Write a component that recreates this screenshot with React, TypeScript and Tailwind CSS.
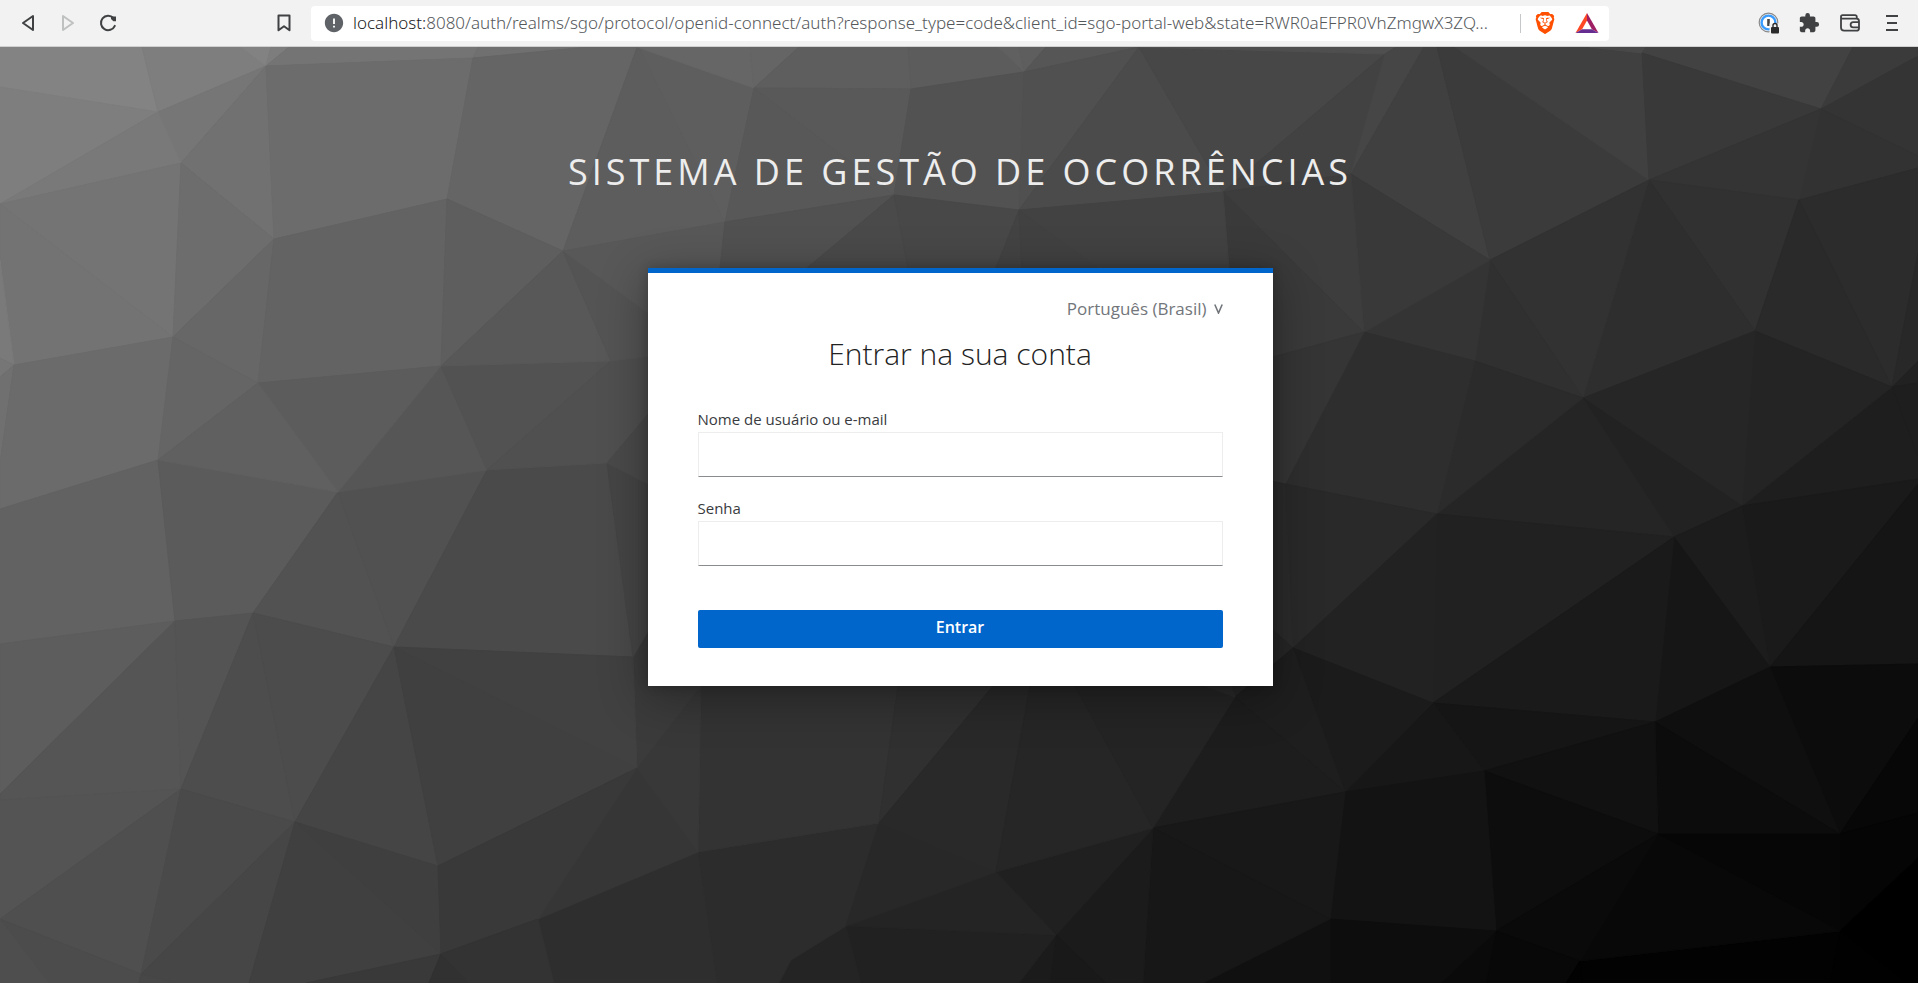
import React from "react";
import { SiBrave } from "react-icons/si";
import { MdExtension, MdError } from "react-icons/md";

/* Shared corners of the low-poly backdrop. */
const POINTS: Record<string, string> = {
  a1: "158,112", a2: "266,66", a3: "181,163", a4: "274,239", a5: "473,58", a6: "447,199",
  a7: "563,251", a8: "0,204", a9: "173,337", a10: "14,365", a11: "258,383", a12: "441,366",
  a13: "611,361", a14: "158,460", a15: "338,492", a16: "487,470", a17: "607,463", a18: "0,509",
  a19: "175,621", a20: "638,45", a21: "394,647", a22: "633,657", a23: "181,789", a24: "295,822",
  a25: "438,866", a26: "637,768", a27: "441,954", a28: "538,919", a29: "141,974", a30: "0,919",
  a31: "698,852", a32: "879,823", a33: "846,926", a34: "996,872", a35: "1153,828", a36: "1056,935",
  a37: "1345,792", a38: "1330,919", a39: "791,960", a40: "1235,697", a41: "1293,648", a42: "1437,514",
  a43: "1674,537", a44: "1742,506", a45: "1770,667", a46: "1433,703", a47: "1655,722", a48: "1484,771",
  a49: "1658,834", a50: "1840,834", a51: "1496,931", a52: "1580,961", a53: "1840,931", a54: "1285,484",
  a55: "1385,54", a56: "1351,174", a58: "1490,260", a59: "1649,180", a60: "1642,53", a61: "1821,109",
  a62: "1799,200", a63: "1755,331", a64: "1892,387", a65: "1583,398", a66: "1475,361", a67: "1364,332",
  a68: "1916,57", a69: "1139,47", a70: "1223,192", a71: "754,88", a72: "911,89", a73: "1024,72",
  a74: "894,195", a75: "1019,210", a76: "725,222", a80: "253,613",
};

/* Grey level of each facet, then its corners. */
const FACETS: [number, string][] = [
  [131, "0,47 142,47 a1 0,87"],
  [126, "0,87 a1 a8"],
  [126, "142,47 241,47 a2 a1"],
  [130, "241,47 271,47 a2"],
  [125, "271,47 289,47 a2"],
  [116, "289,47 478,47 a5 a2"],
  [112, "478,47 588,47 a5"],
  [118, "a1 a2 a3"],
  [121, "a1 a3 a8"],
  [113, "a2 a4 a3"],
  [116, "a8 a3 a9"],
  [115, "a8 a9 a10 0,260"],
  [109, "a3 a4 a9"],
  [108, "a2 a5 a6 a4"],
  [101, "a5 588,47 637,47 a7 a6"],
  [122, "0,260 a10 0,358"],
  [118, "0,358 a10 0,377"],
  [112, "0,377 a10 0,463"],
  [107, "a10 a9 a14 a18 0,463"],
  [103, "a9 a4 a11"],
  [101, "a9 a11 a14"],
  [99, "a4 a6 a12 a11"],
  [94, "a6 a7 a12"],
  [93, "a20 a76 a7"],
  [94, "a20 a71 a76"],
  [102, "637,47 750,47 a71"],
  [101, "750,47 799,47 a71"],
  [94, "799,47 908,47 a72 a71"],
  [92, "908,47 998,47 a73 a72"],
  [96, "998,47 1019,47 a73"],
  [94, "1019,47 1046,47 a73"],
  [86, "1046,47 1139,47 a73"],
  [88, "a71 a74 a76"],
  [89, "a71 a72 a74"],
  [82, "a72 a73 a75 a74"],
  [80, "a73 a69 a75"],
  [75, "a69 a70 a75"],
  [71, "a69 a55 a70"],
  [79, "1139,47 1396,47 a55"],
  [66, "a70 a55 a56"],
  [70, "a55 1396,47 1424,47 a56"],
  [64, "1424,47 1437,47 a58 a56"],
  [59, "1437,47 1455,47 a59 a58"],
  [64, "1455,47 1589,47 a60 a59"],
  [73, "1589,47 1646,47 a60"],
  [66, "1646,47 1853,47 a61 a60"],
  [57, "a60 a61 a59"],
  [59, "1853,47 1918,47 a68 a61"],
  [52, "a61 a68 1918,57 1918,156"],
  [50, "a61 1918,156 1918,168 a62"],
  [52, "a59 a61 a62"],
  [49, "a59 a62 a63"],
  [46, "a59 a63 a65"],
  [50, "a58 a59 a65"],
  [48, "a58 a65 a66"],
  [52, "a58 a66 a67"],
  [57, "a56 a58 a67"],
  [61, "a70 a56 a67"],
  [58, "a70 a67 1240,366 1229,268"],
  [44, "a62 1918,168 1918,253 a64"],
  [42, "a62 a64 a63"],
  [40, "a64 1918,253 1918,361"],
  [33, "a64 1918,361 1918,383"],
  [30, "a64 1918,383 1918,457"],
  [30, "a64 1918,457 1918,479 a44"],
  [36, "a63 a64 a44"],
  [38, "a63 a44 a65"],
  [34, "a65 a44 a43"],
  [37, "a65 a43 a42"],
  [43, "a66 a65 a42"],
  [46, "a67 a66 a42 a54"],
  [53, "a67 a54 1240,474 1240,366"],
  [41, "a54 a42 a41"],
  [43, "a54 a41 1240,600 1240,474"],
  [38, "a41 1240,600 1230,686 a40"],
  [33, "a42 a43 a46"],
  [34, "a42 a46 a41"],
  [26, "a44 1918,479 1918,488 a45"],
  [21, "1918,484 1918,664 a45"],
  [28, "a44 a45 a43"],
  [22, "a43 a45 a47"],
  [26, "a43 a47 a46"],
  [21, "a46 a47 a48"],
  [23, "a46 a48 a37"],
  [27, "a41 a46 a37"],
  [30, "a40 a41 a37"],
  [29, "a35 a40 a37"],
  [12, "a45 1918,664 1918,718 a50"],
  [15, "a45 a50 a47"],
  [12, "a47 a50 a49"],
  [17, "a47 a49 a48"],
  [13, "a48 a49 a51"],
  [19, "a37 a48 a51 a38"],
  [7, "a50 1918,718 1918,813"],
  [5, "a50 1918,813 1918,858 a53"],
  [0, "a53 1918,858 1918,983 1907,983"],
  [1, "a53 1907,983 1830,983"],
  [2, "a53 1830,983 1582,983 a52"],
  [6, "a49 a50 a53"],
  [8, "a49 a53 a52"],
  [10, "a49 a52 a51"],
  [8, "a51 a52 1566,983 1486,983"],
  [10, "a51 1486,983 1441,983"],
  [2, "a52 1566,983 1582,983"],
  [13, "a38 a51 1441,983 1330,983"],
  [16, "a38 1330,983 1203,983"],
  [24, "a35 a37 a38"],
  [23, "a35 a38 1203,983 1143,983"],
  [27, "a36 a35 1143,983 1106,983"],
  [32, "a34 a35 a36"],
  [25, "a36 1106,983 1050,983"],
  [27, "a36 1050,983 1019,983"],
  [33, "a33 a36 1019,983 861,983"],
  [36, "a33 a34 a36"],
  [36, "a33 861,983 779,983 a39"],
  [44, "a31 a32 a33 a39 779,983 717,983"],
  [40, "a32 a34 a33"],
  [46, "a28 a31 717,983 554,983"],
  [54, "a26 a31 a28"],
  [51, "a31 a32 898,686 701,686"],
  [56, "a26 701,686 a31"],
  [48, "a32 993,686 898,686"],
  [41, "a32 993,686 1030,686 a34"],
  [38, "a34 1030,686 1075,686 a35"],
  [36, "a35 1075,686 1205,686 a40"],
  [42, "1205,686 1231,686 a40"],
  [59, "a22 a26 701,686 660,620"],
  [98, "a18 a14 a19 0,644"],
  [91, "a14 a15 a80 a19"],
  [82, "a15 a21 a80"],
  [81, "a15 a16 a21"],
  [74, "a16 a17 a22 a21"],
  [69, "a17 660,490 660,610 a22"],
  [86, "a12 a16 a15"],
  [82, "a12 a13 a16"],
  [92, "a11 a12 a15"],
  [96, "a11 a15 a14"],
  [88, "a7 a12 a13"],
  [80, "a13 660,355 660,400 a17 a16"],
  [74, "a17 660,400 660,490"],
  [84, "a7 a13 660,355 660,322"],
  [88, "a7 a76 720,300 660,322"],
  [81, "a76 a74 807,268 720,268"],
  [74, "a74 807,268 908,268"],
  [72, "a74 908,268 996,268 a75"],
  [67, "a75 996,268 1022,268"],
  [65, "a75 1022,268 1098,268"],
  [66, "a75 a70 1229,268 1098,268"],
  [93, "0,644 a19 0,794"],
  [85, "a19 a23 0,800 0,794"],
  [84, "a19 a80 a23"],
  [77, "a80 a24 a23"],
  [76, "a80 a21 a24"],
  [69, "a21 a25 a24"],
  [64, "a21 a26 a25"],
  [65, "a21 a22 a26"],
  [84, "0,800 a23 a30"],
  [79, "a30 a23 a29"],
  [74, "a23 a24 a29"],
  [70, "a24 249,983 175,983 a29"],
  [64, "a24 a27 306,983 249,983"],
  [63, "a24 a25 a27"],
  [57, "a25 a26 a28 a27"],
  [57, "a27 429,983 306,983"],
  [49, "a27 429,983 469,983"],
  [51, "a27 a28 554,983 469,983"],
  [76, "a30 a29 139,983 49,983"],
  [78, "a30 49,983 0,983"],
  [71, "a29 139,983 175,983"],
];

const corners = (list: string) =>
  list
    .split(" ")
    .map((token) => POINTS[token] ?? token)
    .join(" ");

function Backdrop() {
  return (
    <svg
      aria-hidden="true"
      className="absolute inset-0 h-full w-full"
      viewBox="0 47 1918 936"
      preserveAspectRatio="xMidYMid slice"
    >
      {FACETS.map(([level, list], i) => {
        const fill = `rgb(${level},${level},${level})`;
        return <polygon key={i} points={corners(list)} fill={fill} stroke={fill} strokeWidth="1" strokeLinejoin="round" />;
      })}
    </svg>
  );
}

function BackIcon({ className }: { className: string }) {
  return (
    <svg className={className} viewBox="0 0 14 18" fill="none" stroke="currentColor" strokeWidth="2" strokeLinejoin="round">
      <path d="M12 2v14L2 9z" />
    </svg>
  );
}

function ReloadIcon() {
  return (
    <svg className="h-5 w-5" viewBox="0 0 20 20" fill="none" stroke="currentColor" strokeWidth="2" strokeLinecap="round">
      <path d="M16.8 12.8A7.2 7.2 0 1 1 15.4 5" />
      <path d="M13 3.6h5v4.6h-2.6L13 6z" fill="currentColor" stroke="none" />
    </svg>
  );
}

function BookmarkIcon() {
  return (
    <svg className="h-[18px] w-[14px]" viewBox="0 0 14 18" fill="none" stroke="currentColor" strokeWidth="2" strokeLinejoin="round">
      <path d="M1.5 1.5h11v14.8L7 12.2l-5.500 4.100z" />
    </svg>
  );
}

function BatIcon() {
  return (
    <svg className="h-5 w-6" viewBox="0 0 24 20">
      <path d="M12 0 .5 20l6.600-3.800L12 7.500z" fill="#ff4724" />
      <path d="m12 0 11.500 20-6.600-3.800L12 7.500z" fill="#9e1f63" />
      <path d="M.5 20h23l-6.600-3.800H7.100z" fill="#662d91" />
    </svg>
  );
}

function VaultIcon() {
  return (
    <svg className="h-[22px] w-[22px]" viewBox="0 0 22 22" fill="none">
      <circle cx="10.500" cy="10.500" r="9.300" stroke="#8a8a8a" strokeWidth="1.200" />
      <circle cx="10.500" cy="10.500" r="6.900" fill="#fff" stroke="#3b9cff" strokeWidth="2.400" />
      <path d="M10.500 7v7" stroke="#444" strokeWidth="2.600" />
      <path d="M11.500 11.500h11v11h-11z" fill="#f2f2f2" />
      <rect x="13" y="15" width="8" height="6.500" rx="1" fill="#2b2b2b" />
      <path d="M15 15v-1.500a2 2 0 0 1 4 0V15" stroke="#2b2b2b" strokeWidth="1.400" />
    </svg>
  );
}

function WalletIcon() {
  return (
    <svg className="h-[18px] w-5" viewBox="0 0 20 18" fill="none" stroke="currentColor" strokeWidth="1.800" strokeLinejoin="round">
      <path d="M1 3v10.500a3.200 3.200 0 0 0 3.200 3.200h12.300a2.500 2.500 0 0 0 2.500-2.500V7.200a2.500 2.500 0 0 0-2.500-2.500H2.700a1.700 1.700 0 0 1 0-3.500H15a1.800 1.800 0 0 1 1.800 1.800v1.700" />
      <path d="M19 8.200h-5.800a2.600 2.600 0 0 0 0 5.200H19" />
    </svg>
  );
}

function MenuIcon() {
  return (
    <svg className="h-4 w-3" viewBox="0 0 12 16" stroke="currentColor" strokeWidth="2">
      <path d="M0 1h12M1 8h10M0 15h12" />
    </svg>
  );
}

function BrowserBar() {
  return (
    <header className="relative flex h-[47px] items-center border-b border-[#cfd0d1] bg-[#f2f2f2] pr-5 pl-[21px] text-[#3f4142]">
      <nav className="flex w-[290px] shrink-0 items-center" aria-label="Navegador">
        <button type="button" aria-label="Voltar" className="flex w-10 items-center">
          <BackIcon className="h-[18px] w-[14px]" />
        </button>
        <button type="button" aria-label="Avançar" disabled className="flex w-[37px] items-center text-[#bfc0c0]">
          <BackIcon className="h-[18px] w-[14px] rotate-180" />
        </button>
        <button type="button" aria-label="Recarregar" className="flex items-center">
          <ReloadIcon />
        </button>
        <button type="button" aria-label="Favoritos" className="mr-5 ml-auto flex items-center">
          <BookmarkIcon />
        </button>
      </nav>
      <div className="flex h-[35px] min-w-0 grow items-center rounded bg-white pr-[10px] pl-3">
        <MdError className="h-[22px] w-[22px] shrink-0 text-[#5f6368]" />
        <button type="button" className="ml-2 min-w-0 grow overflow-hidden text-left font-['Noto_Sans','Open_Sans',sans-serif] text-[17px] leading-6 font-light whitespace-nowrap text-[#55585b]">
          <span className="text-[#202124]">localhost:</span>
          8080/auth/realms/sgo/protocol/openid-connect/auth?response_type=code&amp;client_id=sgo-portal-web&amp;state=RWR0aEFPR0VhZmgwX3ZQ...
        </button>
        <span className="h-[19px] w-px shrink-0 bg-[#c6c7c8]" />
        <button type="button" aria-label="Brave Shields" className="ml-[13px] shrink-0">
          <SiBrave className="h-[22px] w-[22px] text-[#ff4f00]" />
        </button>
        <button type="button" aria-label="Brave Rewards" className="ml-[19px] shrink-0">
          <BatIcon />
        </button>
      </div>
      <div className="flex w-[289px] shrink-0 items-center justify-end">
        <button type="button" aria-label="Cofre de senhas"><VaultIcon /></button>
        <button type="button" aria-label="Extensões" className="ml-[18px]"><MdExtension className="h-[22px] w-[22px]" /></button>
        <button type="button" aria-label="Carteira" className="ml-5"><WalletIcon /></button>
        <button type="button" aria-label="Menu" className="ml-[26px]"><MenuIcon /></button>
      </div>
    </header>
  );
}

function Field({ id, label, type }: { id: string; label: string; type: string }) {
  return (
    <div className="mb-5">
      <label htmlFor={id} className="block pb-[2px] text-[15px] leading-[22px] text-[#393b3e]">
        {label}
      </label>
      <input
        id={id}
        name={id}
        type={type}
        className="block h-[45px] w-full border border-[#ededed] border-b-[#8a8d90] bg-white px-2 text-base outline-none"
      />
    </div>
  );
}

export default function App() {
  return (
    <div className="flex min-h-screen flex-col font-['Open_Sans',sans-serif]">
      <BrowserBar />
      <main className="relative flex grow flex-col items-center overflow-hidden bg-[#3a3a3a] pr-4 pl-[18px]">
        <Backdrop />
        <h1 className="relative mt-[98px] text-center text-4xl leading-[54px] tracking-[4px] text-[#ededed] uppercase">
          Sistema de Gestão de Ocorrências
        </h1>
        <section className="relative mt-[69px] w-full max-w-[625px] border-t-[5px] border-[#06c] bg-white px-[50px] pt-6 pb-[38px] shadow-[0_10px_44px_2px_rgba(0,0,0,0.32),0_0_10px_rgba(0,0,0,0.2)]">
          <div className="flex justify-end">
            <button type="button" aria-haspopup="listbox" className="flex items-center gap-[7px] text-[17px] leading-6 text-[#72767b]">
              Português (Brasil)
              <svg className="h-[10px] w-[9px]" viewBox="0 0 9 10" fill="none" stroke="currentColor" strokeWidth="1.600" aria-hidden="true">
                <path d="M.8.5 4.500 9 8.200.5" />
              </svg>
            </button>
          </div>
          <h2 className="mt-[13px] text-center text-3xl leading-10 font-light text-[#222]">Entrar na sua conta</h2>
          <form className="mt-[34px]" onSubmit={(event) => event.preventDefault()}>
            <Field id="username" label="Nome de usuário ou e-mail" type="text" />
            <Field id="password" label="Senha" type="password" />
            <button type="submit" className="mt-11 flex h-[38px] w-full items-center justify-center rounded-[2px] bg-[#06c] pb-1 text-base font-semibold text-white">
              Entrar
            </button>
          </form>
        </section>
      </main>
    </div>
  );
}
